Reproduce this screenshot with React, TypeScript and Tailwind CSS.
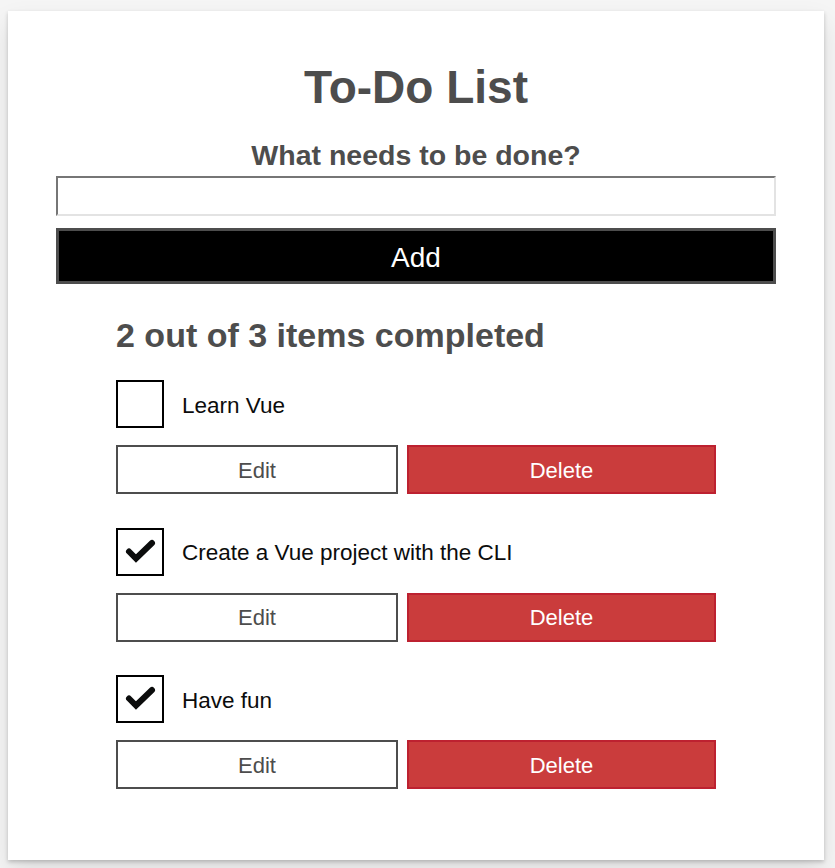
import { useState } from "react";

type Todo = { id: number; label: string; done: boolean };

const initialTodos: Todo[] = [
    { id: 1, label: "Learn Vue", done: false },
    { id: 2, label: "Create a Vue project with the CLI", done: true },
    { id: 3, label: "Have fun", done: true },
];

function CheckBox({ checked, onToggle }: { checked: boolean; onToggle: () => void }) {
    return (
        <button
            onClick={onToggle}
            className="w-[48px] h-[48px] border-2 border-black bg-white flex items-center justify-center shrink-0"
        >
            {checked && (
                <svg width="44" height="44" viewBox="0 0 44 44">
                    <polyline
                        points="11,21.5 18,28.5 34,13"
                        fill="none"
                        stroke="#0b0c0c"
                        strokeWidth="6"
                        strokeLinecap="round"
                        strokeLinejoin="miter"
                    />
                </svg>
            )}
        </button>
    );
}

export default function App() {
    const [todos, setTodos] = useState<Todo[]>(initialTodos);
    const [text, setText] = useState("");

    const done = todos.filter((t) => t.done).length;

    const toggle = (id: number) =>
        setTodos(todos.map((t) => (t.id === id ? { ...t, done: !t.done } : t)));

    const remove = (id: number) => setTodos(todos.filter((t) => t.id !== id));

    const add = () => {
        if (!text.trim()) return;
        setTodos([...todos, { id: Date.now(), label: text.trim(), done: false }]);
        setText("");
    };

    return (
        <main className="min-h-screen bg-[#f5f5f5] pt-[11px] font-['Liberation_Sans',Arial,sans-serif] text-[#4d4d4d]">
            <div className="ml-[8px] w-[816px] bg-white px-[48px] pt-[48px] pb-[71px] shadow-[0_2px_4px_0_rgba(0,0,0,0.2),0_12px_24px_0_rgba(0,0,0,0.1)]">
                {/* Titulo e formulario */}
                <h1 className="text-center text-[46px] leading-[56px] font-bold">To-Do List</h1>
                <label
                    htmlFor="new-todo"
                    className="block mt-[23px] text-center text-[28.5px] leading-[34px] font-bold"
                >
                    What needs to be done?
                </label>
                <input
                    id="new-todo"
                    value={text}
                    onChange={(e) => setText(e.target.value)}
                    className="block mt-[4px] w-full h-[40px] border-2 border-[#e3e3e3] border-t-[#767676] border-l-[#767676] px-2 text-[22px] outline-none"
                />
                <button
                    onClick={add}
                    className="block mt-[12px] w-full h-[56px] bg-black text-white text-[28px] pt-[3px] border-[3px] border-[#4d4d4d]"
                >
                    Add
                </button>

                {/* Lista */}
                <div className="w-[600px] mx-auto">
                    <h2 className="mt-[31px] text-[34px] leading-[40px] font-bold">
                        {done} out of {todos.length} items completed
                    </h2>
                    <ul className="mt-[25px] flex flex-col gap-[33.5px]">
                        {todos.map((todo) => (
                            <li key={todo.id}>
                                <div className="flex items-center gap-[18px]">
                                    <CheckBox checked={todo.done} onToggle={() => toggle(todo.id)} />
                                    <span className="pt-[3px] text-[22.5px] text-[#0b0c0c]">{todo.label}</span>
                                </div>
                                <div className="mt-[17px] flex gap-[9px]">
                                    <button className="w-[282px] h-[49px] pt-[1px] border-2 border-[#4d4d4d] bg-white text-[22px] text-[#4d4d4d]">
                                        Edit
                                    </button>
                                    <button
                                        onClick={() => remove(todo.id)}
                                        className="w-[309px] h-[49px] pt-[1px] border-2 border-[#bd2130] bg-[#ca3c3c] text-[22px] text-white"
                                    >
                                        Delete
                                    </button>
                                </div>
                            </li>
                        ))}
                    </ul>
                </div>
            </div>
        </main>
    );
}
